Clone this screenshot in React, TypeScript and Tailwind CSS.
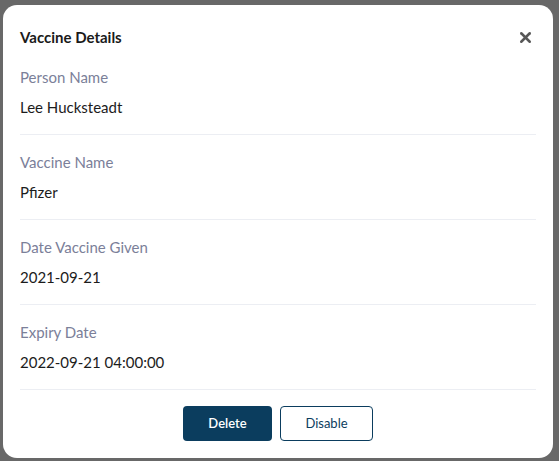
import { X } from 'lucide-react';

// ── Data ─────────────────────────────────────────────────────────────────────

const FIELDS = [
    { label: 'Person Name', value: 'Lee Hucksteadt' },
    { label: 'Vaccine Name', value: 'Pfizer' },
    { label: 'Date Vaccine Given', value: '2021-09-21' },
    { label: 'Expiry Date', value: '2022-09-21 04:00:00' },
];

// ── App ──────────────────────────────────────────────────────────────────────

export default function App() {
    return (
        <div
            className="w-[559px] h-[461px] bg-[#686868] pt-[5px] pl-[3px] overflow-hidden"
            style={{ fontFamily: 'Lato, "Open Sans", sans-serif' }}
        >
            <div className="w-[550px] h-[453px] bg-white rounded-[14px] px-[17px] pt-[22px] pb-[17px] flex flex-col">
                <div className="flex items-center justify-between h-5">
                    <h2 className="text-[15px] font-bold text-[#1a1a1a] leading-5">Vaccine Details</h2>
                    <button className="text-[#575757] mr-[2px]">
                        <X size={17} strokeWidth={3.5} />
                    </button>
                </div>

                <div className="mt-[3px]">
                    {FIELDS.map(f => (
                        <div key={f.label} className="pt-[17px] pb-[17px] border-b border-[#eceef3]">
                            <p className="text-[15px] leading-5 text-[#7b8099]">{f.label}</p>
                            <p className="text-[15px] leading-5 text-[#1c1c1c] mt-[10px]">{f.value}</p>
                        </div>
                    ))}
                </div>

                <div className="flex justify-center gap-2 mt-4">
                    <button className="w-[89px] h-[35px] rounded bg-[#0b3d5e] text-white text-[13px] font-semibold">
                        Delete
                    </button>
                    <button className="w-[93px] h-[35px] rounded border border-[#0b3d5e] text-[#0b3d5e] text-[13px]">
                        Disable
                    </button>
                </div>
            </div>
        </div>
    );
}
